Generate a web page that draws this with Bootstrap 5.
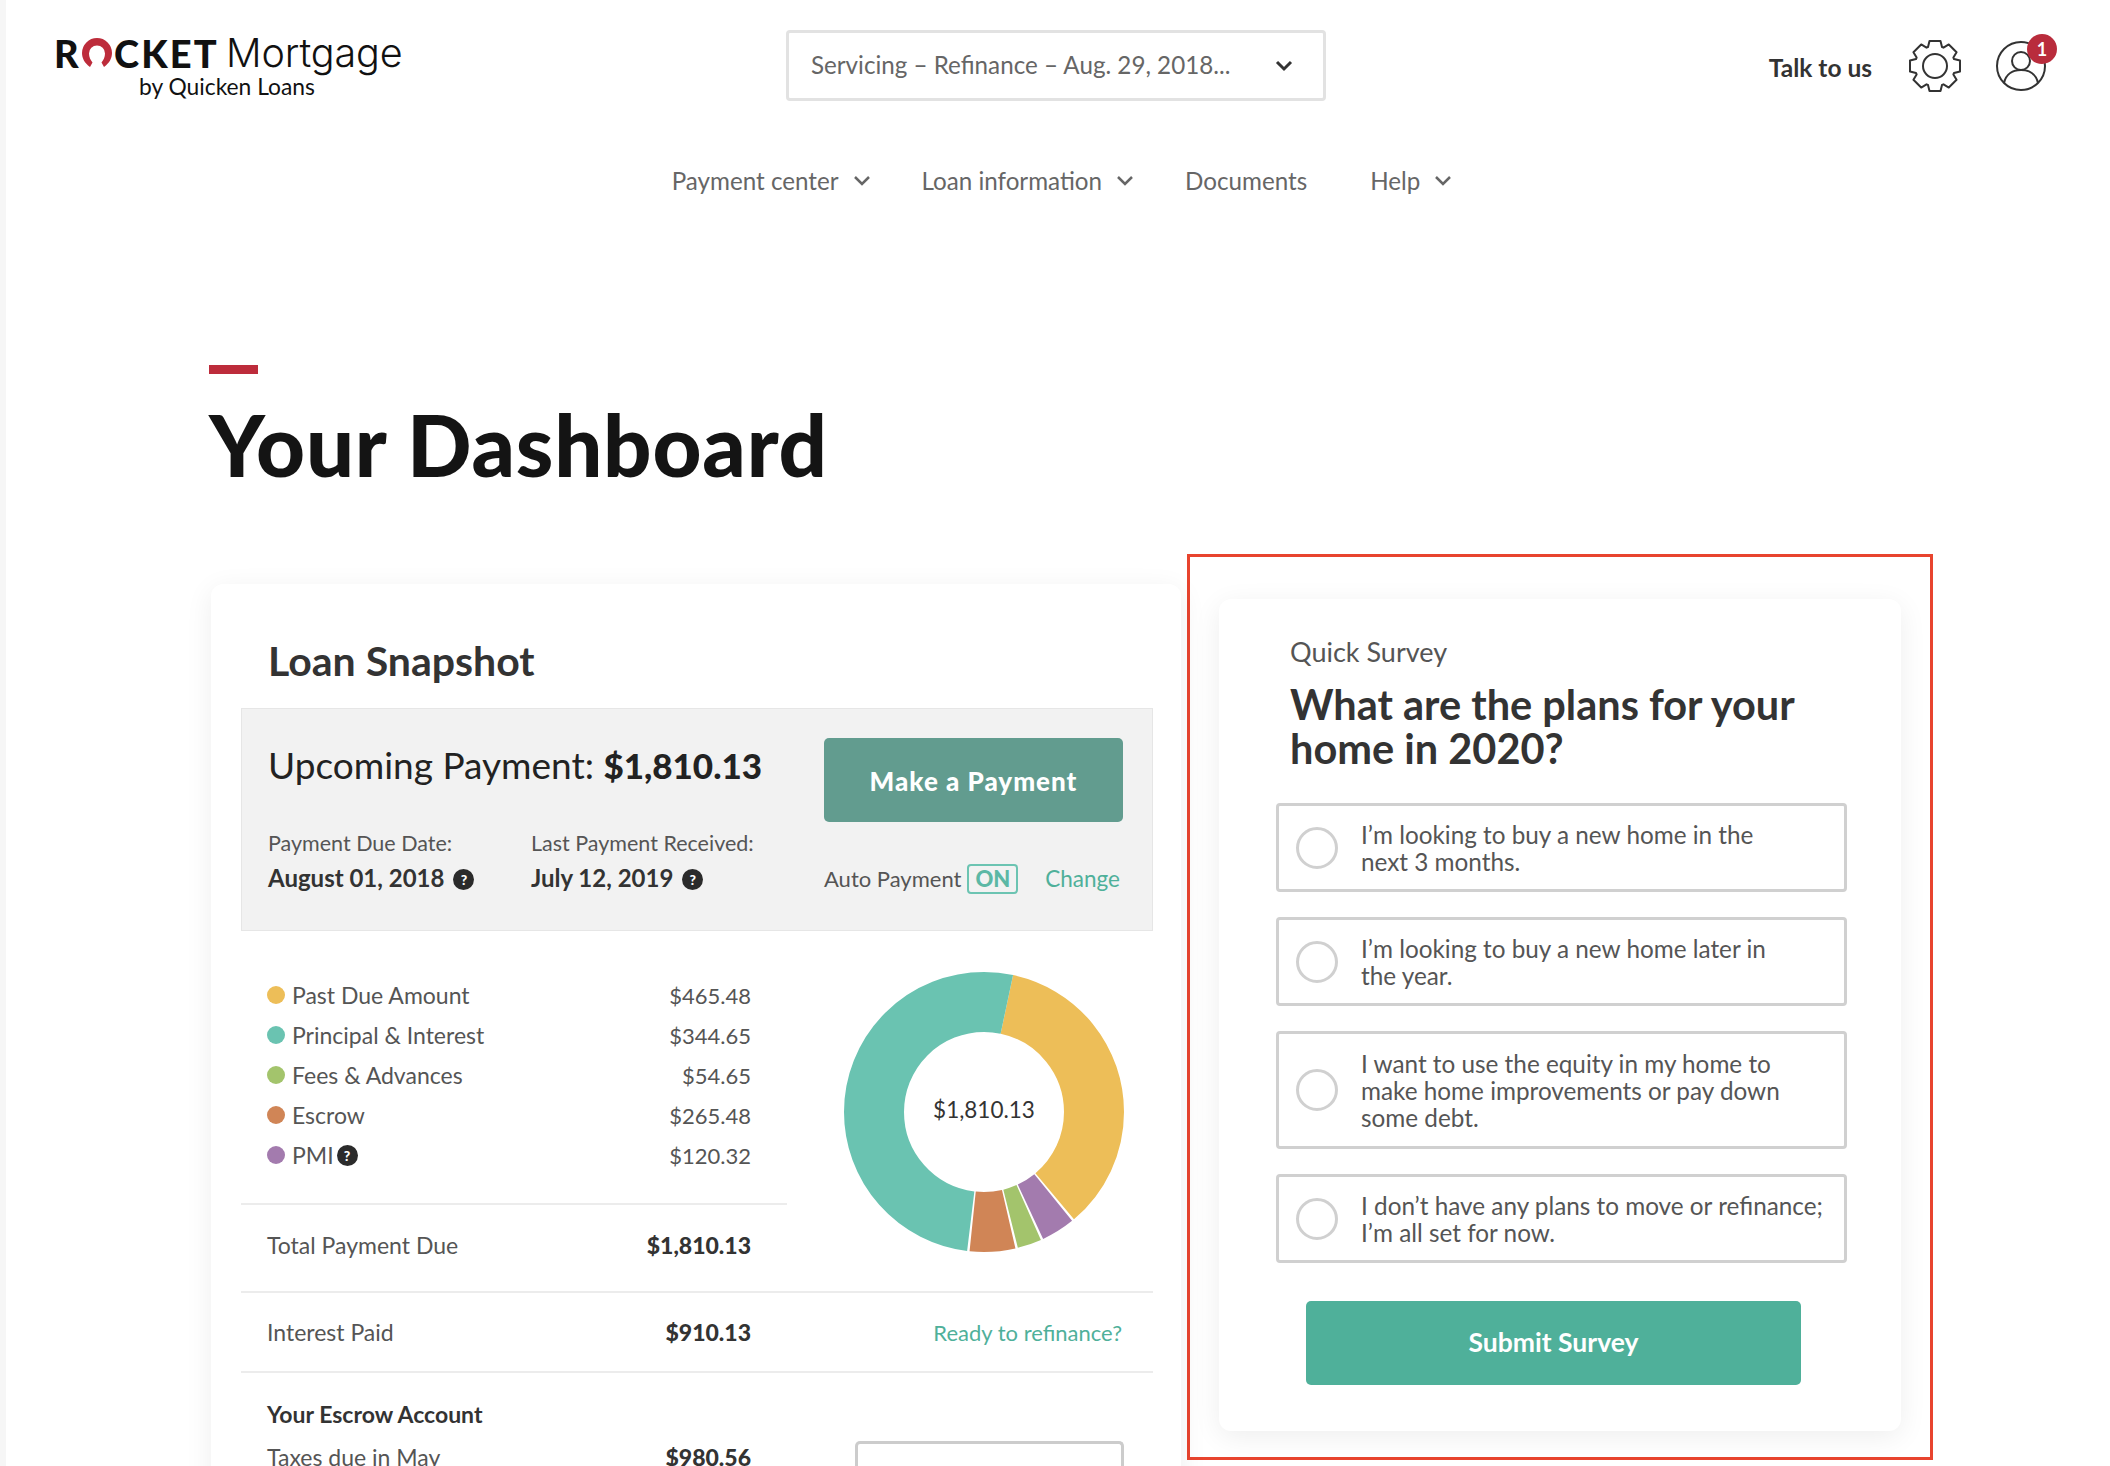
<!DOCTYPE html>
<html lang="en">
<head>
  <meta charset="UTF-8" />
  <title>Your Dashboard</title>
  <meta name="viewport" content="width=device-width, initial-scale=1.0" />
  <link href="https://cdn.jsdelivr.net/npm/bootstrap@5.3.0/dist/css/bootstrap.min.css" rel="stylesheet" />
  <style>
    html, body { height: 1466px; overflow: hidden; }
    body {
      font-family: "Lato", "Liberation Sans", sans-serif;
      color: #333;
      background: #fff;
      border-left: 6px solid #f6f6f6;
    }
    .top-bar { height: 130px; padding: 30px 63px 0 48px; }
    .logo-box { width: 270px; height: 80px; margin-top: 4px; color: #111; flex: none; }
    .logo-rocket { font-weight: 900; font-size: 38px; line-height: 38px; letter-spacing: 2.200px; }
    .logo-o { flex: none; margin: 0 1px 0 0; }
    .logo-word { font-size: 39.500px; line-height: 38px; margin-left: 7px; font-family: "Inter", "Lato", sans-serif; font-weight: 300; letter-spacing: -.1px; }
    .logo-sub { font-size: 22.800px; line-height: 24px; margin: 2px 0 0 85px; font-weight: 400; }
    .loan-select {
      width: 540px; height: 71px; margin-left: 462px; flex: none;
      border: 3px solid #e2e2e2; border-radius: 4px;
      padding: 0 30px 0 22px; font-size: 24.200px; color: #666;
    }
    .talk-link { font-size: 24.500px; font-weight: 700; color: #333; margin: 20px 37px 0 auto; }
    .gear-icon { margin-top: 10px; }
    .user-wrap { width: 52px; height: 52px; margin: 10px 0 0 34px; }
    .user-badge {
      position: absolute; top: -6px; right: -10px; width: 30px; height: 30px;
      background: #b92c3c; color: #fff; border-radius: 50%; font-size: 18px; font-weight: 700;
      line-height: 30px; text-align: center;
    }
    .main-nav { height: 235px; padding: 33px 0 0 8px; }
    .main-nav a { font-size: 24.200px; color: #666; text-decoration: none; height: 36px; margin-left: 51px; }
    .main-nav a:first-child { margin-left: 0; }
    .main-nav a.nav-help { margin-left: 63px; }
    .main-nav svg { margin-left: 14px; }
    .page-wrap { padding-left: 203px; }
    .red-dash { width: 49px; height: 9px; background: #bd2c3b; }
    .page-title { font-size: 85px; line-height: 100px; font-weight: 900; color: #141414; letter-spacing: .8px; margin: 20px 0 0; }
    .cols-row { margin-top: 60px; align-items: flex-start; }
    .snap-card, .survey-card {
      background: #fff; border: 0; border-radius: 12px;
      box-shadow: 0 6px 28px rgba(0,0,0,.07);
    }
    .snap-card { width: 970px; height: 1000px; margin: 30px 0 0 2px; padding: 0 28px 0 30px; flex: none; }
    .snap-title { font-size: 41px; line-height: 48px; font-weight: 700; color: #333; margin: 53px 0 23px 27px; }
    .pay-box { height: 223px; background: #f2f2f2; border: 1px solid #e6e6e6; padding: 29px 29px 0 26px; }
    .up-label { font-size: 37px; line-height: 54px; color: #222; }
    .up-label b { font-weight: 900; font-size: 35px; }
    .btn-pay {
      width: 299px; height: 84px; background: #629c8f; border: 0; border-radius: 5px;
      color: #fff; font-size: 26px; font-weight: 900; letter-spacing: 1px; padding-top: 8px;
    }
    .date-cols { margin-top: 37px; }
    .due-col { width: 263px; }
    .small-lbl { font-size: 21.500px; line-height: 28px; color: #555; }
    .date-val { font-size: 24px; line-height: 42px; font-weight: 700; color: #333; }
    .help-dot {
      display: inline-block; width: 21px; height: 21px; border-radius: 50%; background: #2b2b2b; color: #fff;
      font-size: 14px; font-weight: 900; line-height: 21px; text-align: center; vertical-align: 2px; margin-left: 9px;
    }
    .legend-row .help-dot { margin-left: 3px; }
    .auto-line { margin-top: 40px; }
    .auto-txt { font-size: 22px; color: #555; }
    .on-tag { border: 2px solid #6cc4b2; border-radius: 4px; color: #5cb8a5; font-weight: 900; font-size: 22px; line-height: 26px; padding: 0 6px; margin: 0 27px 0 6px; }
    .teal-link { color: #4fb09a; text-decoration: none; font-size: 22.500px; }
    .legend-list { padding: 44px 0 28px; }
    .legend-row { height: 40px; font-size: 23px; color: #555; padding: 0 36px 0 26px; }
    .legend-num { font-size: 22px; margin-left: auto; }
    .legend-dot { width: 18px; height: 18px; border-radius: 50%; margin-right: 7px; flex: none; }
    .left-col { width: 546px; flex: none; }
    .sum-row { font-size: 23px; color: #555; padding: 0 36px 0 26px; }
    .sum-row b { font-weight: 900; color: #333; }
    .total-row { height: 86px; padding-bottom: 6px; }
    .rule-full { border-top: 2px solid #ececec; }
    .donut-wrap { margin-right: 19px; }
    .donut-svg { margin-top: 31px; }
    .interest-row { height: 78px; }
    .refi-link { margin: 1px 31px 0 auto; font-size: 22px; }
    .escrow-head { font-weight: 700; color: #333; }
    .outline-box { width: 269px; height: 60px; border: 3px solid #ccc; border-bottom: 0; border-radius: 5px 5px 0 0; margin: 68px 29px 0 auto; }
    .survey-col { border: 3px solid #e8442e; width: 746px; height: 906px; margin-left: 6px; padding: 42px 29px 0 29px; flex: none; }
    .survey-card { height: 832px; padding: 36px 54px 0 57px; }
    .quick-lbl { font-size: 27px; line-height: 34px; color: #555; margin-left: 14px; }
    .quick-q { font-size: 41.500px; line-height: 44px; font-weight: 700; color: #333; margin: 13px 0 33px 14px; }
    .opt-box {
      border: 3px solid #d0d0d0; border-radius: 4px; min-height: 89px; padding: 0 10px 0 17px;
      margin-bottom: 25px; font-size: 24.300px; line-height: 27px; color: #555;
    }
    .opt-tall { min-height: 118px; }
    .opt-ring { width: 42px; height: 42px; border: 3px solid #d0d0d0; border-radius: 50%; flex: none; margin-right: 23px; }
    .btn-survey {
      display: block; width: 495px; height: 84px; margin: 13px 0 0 30px; background: #4fb09a; border: 0; border-radius: 5px;
      color: #fff; font-size: 26.500px; font-weight: 700;
    }
  </style>
</head>
<body>

<header class="top-bar d-flex align-items-start">
  <a class="logo-box d-block text-decoration-none" href="#">
    <div class="d-flex align-items-center text-nowrap">
      <span class="logo-rocket">R</span>
      <svg class="logo-o" width="32" height="30" viewBox="0 0 32 30"><path d="M9 29 C3.500 25 1 20 1 15 A15 15 0 0 1 31 15 C31 20 28.500 25 23 29 L20.500 24.500 C22.500 22 24 19 24 15.500 A8 8 0 0 0 8 15.500 C8 19 9.500 22 11.500 24.500 Z" fill="#bd2c3b"/></svg>
      <span class="logo-rocket">CKET</span>
      <span class="logo-word">Mortgage</span>
    </div>
    <div class="logo-sub text-nowrap">by Quicken Loans</div>
  </a>
  <div class="loan-select d-flex align-items-center justify-content-between">
    <span>Servicing – Refinance – Aug. 29, 2018...</span>
    <svg width="18" height="12" viewBox="0 0 18 12"><path d="M2 2 L9 9 L16 2" fill="none" stroke="#333" stroke-width="3"/></svg>
  </div>
  <a class="talk-link text-decoration-none" href="#">Talk to us</a>
  <svg class="gear-icon" width="52" height="52" viewBox="0 0 52 52">
    <g transform="translate(26 26)" fill="none" stroke="#333" stroke-width="2">
      <polygon stroke-linejoin="round" points="-7,-19 -5.500,-25 5.500,-25 7,-19 8.490,-18.380 13.790,-21.570 21.570,-13.790 18.380,-8.490 19,-7 25,-5.500 25,5.500 19,7 18.380,8.490 21.570,13.790 13.790,21.570 8.490,18.380 7,19 5.500,25 -5.500,25 -7,19 -8.490,18.380 -13.790,21.570 -21.570,13.790 -18.380,8.490 -19,7 -25,5.500 -25,-5.500 -19,-7 -18.380,-8.490 -21.570,-13.790 -13.790,-21.570 -8.490,-18.380"/>
      <circle r="12"/>
    </g>
  </svg>
  <div class="user-wrap position-relative">
    <svg width="52" height="52" viewBox="0 0 52 52" fill="none" stroke="#333" stroke-width="2">
      <circle cx="26" cy="26" r="24"/>
      <circle cx="26" cy="21" r="9"/>
      <path d="M9 43 C11 34 18 30 26 30 C34 30 41 34 43 43"/>
    </svg>
    <span class="user-badge">1</span>
  </div>
</header>

<nav class="main-nav d-flex align-items-start justify-content-center">
  <a class="d-flex align-items-center" href="#">Payment center<svg width="18" height="12" viewBox="0 0 18 12"><path d="M2 2 L9 9 L16 2" fill="none" stroke="#666" stroke-width="2.500"/></svg></a>
  <a class="d-flex align-items-center" href="#">Loan information<svg width="18" height="12" viewBox="0 0 18 12"><path d="M2 2 L9 9 L16 2" fill="none" stroke="#666" stroke-width="2.500"/></svg></a>
  <a class="d-flex align-items-center" href="#">Documents</a>
  <a class="d-flex align-items-center nav-help" href="#">Help<svg width="18" height="12" viewBox="0 0 18 12"><path d="M2 2 L9 9 L16 2" fill="none" stroke="#666" stroke-width="2.500"/></svg></a>
</nav>

<main class="page-wrap">
  <div class="red-dash"></div>
  <h1 class="page-title">Your Dashboard</h1>

  <div class="d-flex cols-row">
    <section class="card snap-card">
      <h2 class="snap-title">Loan Snapshot</h2>
      <div class="pay-box d-flex justify-content-between">
        <div>
          <div class="up-label">Upcoming Payment: <b>$1,810.13</b></div>
          <div class="d-flex date-cols">
            <div class="due-col">
              <div class="small-lbl">Payment Due Date:</div>
              <div class="date-val">August 01, 2018<span class="help-dot">?</span></div>
            </div>
            <div>
              <div class="small-lbl">Last Payment Received:</div>
              <div class="date-val">July 12, 2019<span class="help-dot">?</span></div>
            </div>
          </div>
        </div>
        <div>
          <button class="btn btn-pay">Make a Payment</button>
          <div class="d-flex align-items-center auto-line">
            <span class="auto-txt">Auto Payment</span>
            <span class="on-tag">ON</span>
            <a class="teal-link" href="#">Change</a>
          </div>
        </div>
      </div>

      <div class="d-flex">
        <div class="left-col">
          <div class="legend-list">
            <div class="legend-row d-flex align-items-center"><span class="legend-dot" style="background:#edbe58"></span>Past Due Amount<span class="legend-num">$465.48</span></div>
            <div class="legend-row d-flex align-items-center"><span class="legend-dot" style="background:#6ac3b1"></span>Principal &amp; Interest<span class="legend-num">$344.65</span></div>
            <div class="legend-row d-flex align-items-center"><span class="legend-dot" style="background:#a3c46c"></span>Fees &amp; Advances<span class="legend-num">$54.65</span></div>
            <div class="legend-row d-flex align-items-center"><span class="legend-dot" style="background:#d08556"></span>Escrow<span class="legend-num">$265.48</span></div>
            <div class="legend-row d-flex align-items-center"><span class="legend-dot" style="background:#a37bae"></span>PMI<span class="help-dot">?</span><span class="legend-num">$120.32</span></div>
          </div>
          <div class="rule-full"></div>
          <div class="sum-row total-row d-flex justify-content-between align-items-center"><span>Total Payment Due</span><b>$1,810.13</b></div>
        </div>
        <div class="flex-grow-1 d-flex justify-content-end donut-wrap">
          <svg width="300" height="300" viewBox="0 0 300 300" class="donut-svg">
            <g fill="none" stroke-width="60" transform="rotate(-90 150 150)">
              <circle cx="150" cy="150" r="110" pathLength="360" stroke="#edbe58" stroke-dasharray="128 232" stroke-dashoffset="-12"/>
              <circle cx="150" cy="150" r="110" pathLength="360" stroke="#a37bae" stroke-dasharray="14 346" stroke-dashoffset="-141"/>
              <circle cx="150" cy="150" r="110" pathLength="360" stroke="#a3c46c" stroke-dasharray="10 350" stroke-dashoffset="-156"/>
              <circle cx="150" cy="150" r="110" pathLength="360" stroke="#d08556" stroke-dasharray="19 341" stroke-dashoffset="-167"/>
              <circle cx="150" cy="150" r="110" pathLength="360" stroke="#6ac3b1" stroke-dasharray="185 175" stroke-dashoffset="-187"/>
            </g>
            <text x="150" y="150" text-anchor="middle" dominant-baseline="middle" font-size="22.500" fill="#333" font-family="Lato">$1,810.13</text>
          </svg>
        </div>
      </div>
      <div class="rule-full"></div>
      <div class="d-flex align-items-center interest-row">
        <div class="left-col sum-row d-flex justify-content-between"><span>Interest Paid</span><b>$910.13</b></div>
        <a class="teal-link refi-link" href="#">Ready to refinance?</a>
      </div>
      <div class="rule-full"></div>
      <div class="d-flex">
        <div class="left-col sum-row pt-4">
          <div class="escrow-head">Your Escrow Account</div>
          <div class="d-flex justify-content-between mt-2"><span>Taxes due in May</span><b>$980.56</b></div>
        </div>
        <div class="outline-box"></div>
      </div>
    </section>

    <aside class="survey-col">
      <div class="card survey-card">
        <div class="quick-lbl">Quick Survey</div>
        <div class="quick-q">What are the plans for your home in 2020?</div>
        <label class="opt-box d-flex align-items-center"><span class="opt-ring"></span><span>I’m looking to buy a new home in the<br>next 3 months.</span></label>
        <label class="opt-box d-flex align-items-center"><span class="opt-ring"></span><span>I’m looking to buy a new home later in<br>the year.</span></label>
        <label class="opt-box opt-tall d-flex align-items-center"><span class="opt-ring"></span><span>I want to use the equity in my home to<br>make home improvements or pay down<br>some debt.</span></label>
        <label class="opt-box d-flex align-items-center"><span class="opt-ring"></span><span>I don’t have any plans to move or refinance;<br>I’m all set for now.</span></label>
        <button class="btn btn-survey">Submit Survey</button>
      </div>
    </aside>
  </div>
</main>

</body>
</html>
